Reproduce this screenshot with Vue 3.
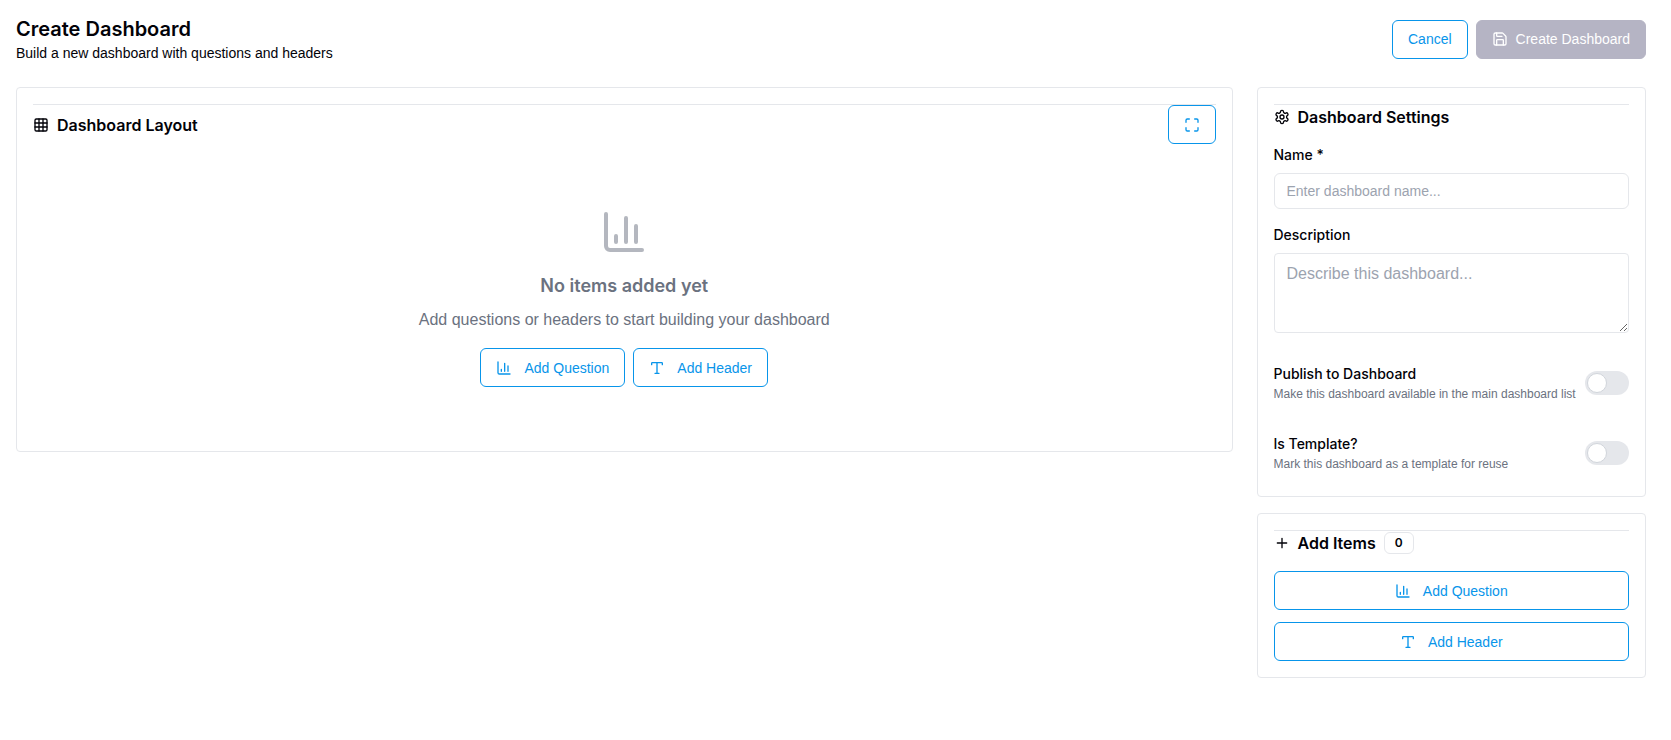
<template>
  <main class="page">
    <header class="page-header">
      <div>
        <h1 class="page-title">Create Dashboard</h1>
        <p class="page-subtitle">Build a new dashboard with questions and headers</p>
      </div>
      <div class="actions">
        <button type="button" class="btn">Cancel</button>
        <button type="button" class="btn btn-primary" :disabled="!name">
          <svg class="icon" viewBox="0 0 24 24">
            <path d="M15.2 3a2 2 0 0 1 1.4.6l3.8 3.8a2 2 0 0 1 .6 1.4V19a2 2 0 0 1-2 2H5a2 2 0 0 1-2-2V5a2 2 0 0 1 2-2z"/>
            <path d="M17 21v-7a1 1 0 0 0-1-1H8a1 1 0 0 0-1 1v7"/>
            <path d="M7 3v4a1 1 0 0 0 1 1h7"/>
          </svg>
          Create Dashboard
        </button>
      </div>
    </header>

    <div class="columns">
      <section class="card layout-card">
        <div class="card-header">
          <h2 class="card-title">
            <svg class="icon" viewBox="0 0 24 24">
              <rect width="18" height="18" x="3" y="3" rx="2"/>
              <path d="M3 9h18M3 15h18M9 3v18M15 3v18"/>
            </svg>
            Dashboard Layout
          </h2>
          <button type="button" class="btn" aria-label="Fullscreen">
            <svg class="icon" viewBox="0 0 24 24">
              <path d="M8 3H5a2 2 0 0 0-2 2v3"/>
              <path d="M21 8V5a2 2 0 0 0-2-2h-3"/>
              <path d="M3 16v3a2 2 0 0 0 2 2h3"/>
              <path d="M16 21h3a2 2 0 0 0 2-2v-3"/>
            </svg>
          </button>
        </div>
        <div class="empty">
          <svg class="icon empty-icon" viewBox="0 0 24 24">
            <path :d="icons.chart"/>
          </svg>
          <h3 class="empty-title">No items added yet</h3>
          <p class="empty-text">Add questions or headers to start building your dashboard</p>
          <div class="actions">
            <button v-for="item in itemTypes" :key="item.label" type="button" class="btn btn-item">
              <svg class="icon" viewBox="0 0 24 24"><path :d="item.icon"/></svg>
              {{ item.label }}
            </button>
          </div>
        </div>
      </section>

      <aside class="sidebar">
        <section class="card">
          <div class="card-header">
            <h2 class="card-title">
              <svg class="icon" viewBox="0 0 24 24">
                <path d="M12.22 2h-.44a2 2 0 0 0-2 2v.18a2 2 0 0 1-1 1.73l-.43.25a2 2 0 0 1-2 0l-.15-.08a2 2 0 0 0-2.73.73l-.22.38a2 2 0 0 0 .73 2.73l.15.1a2 2 0 0 1 1 1.72v.51a2 2 0 0 1-1 1.74l-.15.09a2 2 0 0 0-.73 2.73l.22.38a2 2 0 0 0 2.73.73l.15-.08a2 2 0 0 1 2 0l.43.25a2 2 0 0 1 1 1.73V20a2 2 0 0 0 2 2h.44a2 2 0 0 0 2-2v-.18a2 2 0 0 1 1-1.73l.43-.25a2 2 0 0 1 2 0l.15.08a2 2 0 0 0 2.73-.73l.22-.39a2 2 0 0 0-.73-2.73l-.15-.08a2 2 0 0 1-1-1.74v-.5a2 2 0 0 1 1-1.74l.15-.09a2 2 0 0 0 .73-2.73l-.22-.38a2 2 0 0 0-2.73-.73l-.15.08a2 2 0 0 1-2 0l-.43-.25a2 2 0 0 1-1-1.73V4a2 2 0 0 0-2-2z"/>
                <circle cx="12" cy="12" r="3"/>
              </svg>
              Dashboard Settings
            </h2>
          </div>
          <div class="settings">
            <div class="field">
              <label for="name">Name *</label>
              <input id="name" v-model="name" type="text" placeholder="Enter dashboard name...">
            </div>
            <div class="field">
              <label for="description">Description</label>
              <textarea id="description" v-model="description" placeholder="Describe this dashboard..."></textarea>
            </div>
            <div v-for="option in options" :key="option.id" class="option">
              <div class="option-text">
                <label :for="option.id">{{ option.label }}</label>
                <p>{{ option.hint }}</p>
              </div>
              <input :id="option.id" v-model="option.value" type="checkbox" class="switch">
            </div>
          </div>
        </section>

        <section class="card">
          <div class="card-header">
            <h2 class="card-title">
              <svg class="icon" viewBox="0 0 24 24"><path d="M5 12h14M12 5v14"/></svg>
              Add Items
              <span class="badge">0</span>
            </h2>
          </div>
          <div class="item-list">
            <button v-for="item in itemTypes" :key="item.label" type="button" class="btn btn-item">
              <svg class="icon" viewBox="0 0 24 24"><path :d="item.icon"/></svg>
              {{ item.label }}
            </button>
          </div>
        </section>
      </aside>
    </div>
  </main>
</template>

<script setup>
import {ref} from 'vue';

const icons = {
  chart: 'M3 3v16a2 2 0 0 0 2 2h16M18 17V9M13 17V5M8 17v-3',
  type: 'M4 7V5a1 1 0 0 1 1-1h14a1 1 0 0 1 1 1v2M9 20h6M12 4v16'
};

const itemTypes = [
  {label: 'Add Question', icon: icons.chart},
  {label: 'Add Header', icon: icons.type}
];

const name = ref('');
const description = ref('');
const options = ref([
  {
    id: 'publish',
    label: 'Publish to Dashboard',
    hint: 'Make this dashboard available in the main dashboard list',
    value: false
  },
  {
    id: 'template',
    label: 'Is Template?',
    hint: 'Mark this dashboard as a template for reuse',
    value: false
  }
]);
</script>

<style>
body {
  margin: 0;
  background: #fff;
}
</style>

<style scoped>
* {
  box-sizing: border-box;
}

h1, h2, h3, p {
  margin: 0;
}

.page {
  padding: 15px 25px 24px 16px;
  font-family: "Liberation Sans", Arial, sans-serif;
  font-size: 14px;
  line-height: 20px;
  color: #020208;
}

h1, h2, h3, label {
  font-family: Inter, "Liberation Sans", sans-serif;
}

.page-header {
  display: flex;
  align-items: center;
  justify-content: space-between;
  margin-bottom: 24px;
}

.page-title {
  font-size: 20px;
  line-height: 28px;
  font-weight: 600;
}

.actions {
  display: flex;
  gap: 8px;
}

.icon {
  flex: none;
  width: 16px;
  height: 16px;
  fill: none;
  stroke: currentColor;
  stroke-width: 2;
  stroke-linecap: round;
  stroke-linejoin: round;
}

.btn {
  display: inline-flex;
  align-items: center;
  justify-content: center;
  gap: 8px;
  height: 39px;
  padding: 0 15px;
  border: 1px solid #0895ea;
  border-radius: 6px;
  background: #fff;
  color: #0895ea;
  font: inherit;
  white-space: nowrap;
  cursor: pointer;
}

.btn-primary {
  border-color: #b5b4c4;
  background: #b5b4c4;
  color: #fff;
}

.btn-item {
  gap: 12px;
}

.columns {
  display: grid;
  grid-template-columns: repeat(4, minmax(0, 1fr));
  gap: 24px;
  align-items: start;
}

.layout-card {
  grid-column: span 3;
}

.sidebar {
  display: flex;
  flex-direction: column;
  gap: 16px;
}

.card {
  padding: 16px;
  border: 1px solid #e5e7eb;
  border-radius: 4px;
}

.card-header {
  display: flex;
  align-items: center;
  justify-content: space-between;
  margin-bottom: 16px;
  border-top: 1px solid #e5e7eb;
}

.card-title {
  display: flex;
  align-items: center;
  gap: 8px;
  font-size: 16px;
  line-height: 24px;
  font-weight: 600;
}

.card-header .btn {
  width: 48px;
}

.empty {
  display: flex;
  flex-direction: column;
  align-items: center;
  padding: 48px 0;
  color: #6b7280;
  text-align: center;
}

.empty-icon {
  width: 48px;
  height: 48px;
  margin-bottom: 16px;
  opacity: 0.5;
}

.empty-title {
  margin-bottom: 8px;
  font-size: 18px;
  line-height: 28px;
  font-weight: 600;
}

.empty-text {
  margin-bottom: 16px;
  font-size: 16px;
  line-height: 24px;
}

.settings {
  display: flex;
  flex-direction: column;
  gap: 16px;
}

.field {
  display: flex;
  flex-direction: column;
  gap: 8px;
}

label {
  font-weight: 500;
}

.field input,
.field textarea {
  width: 100%;
  border: 1px solid #e5e7eb;
  background: #fff;
  color: inherit;
  font-family: inherit;
}

.field input {
  height: 36px;
  padding: 0 12px;
  border-radius: 6px;
  font-size: 14px;
}

.field textarea {
  height: 80px;
  margin-bottom: 7px;
  padding: 8px 12px;
  border-radius: 4px;
  font-size: 16px;
  line-height: 24px;
  resize: vertical;
}

::placeholder {
  color: #9ca3af;
}

.option {
  display: flex;
  align-items: center;
  justify-content: space-between;
  padding: 8px 0;
}

.option-text {
  display: flex;
  flex-direction: column;
  gap: 2px;
  min-width: 0;
}

.option-text p {
  color: #6b7280;
  font-size: 12px;
  line-height: 16px;
}

.switch {
  flex: none;
  appearance: none;
  width: 44px;
  height: 24px;
  margin: 0;
  padding: 2px;
  border-radius: 12px;
  background: #e5e7eb;
  cursor: pointer;
}

.switch::before {
  content: "";
  display: block;
  width: 20px;
  height: 20px;
  box-sizing: border-box;
  border: 1px solid #d1d5db;
  border-radius: 50%;
  background: #fff;
}

.switch:checked {
  background: #0895ea;
}

.switch:checked::before {
  margin-left: 20px;
}

.badge {
  padding: 2px 10px;
  border: 1px solid #e5e7eb;
  border-radius: 6px;
  font-size: 12px;
  line-height: 16px;
}

.item-list {
  display: flex;
  flex-direction: column;
  gap: 12px;
}
</style>
